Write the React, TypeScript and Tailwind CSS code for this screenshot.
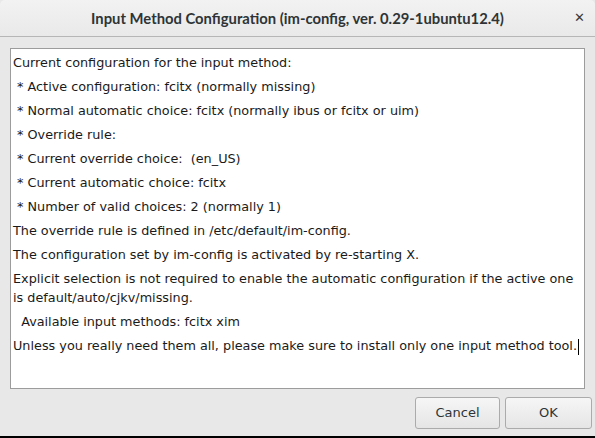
import React from 'react';

const lines: string[] = [
  'Current configuration for the input method:',
  ' * Active configuration: fcitx (normally missing)',
  ' * Normal automatic choice: fcitx (normally ibus or fcitx or uim)',
  ' * Override rule: ',
  ' * Current override choice:  (en_US)',
  ' * Current automatic choice: fcitx',
  ' * Number of valid choices: 2 (normally 1)',
  'The override rule is defined in /etc/default/im-config.',
  'The configuration set by im-config is activated by re-starting X.',
  'Explicit selection is not required to enable the automatic configuration if the active one is default/auto/cjkv/missing.',
  '  Available input methods: fcitx xim',
];

const App = () => {
  return (
    <div className="w-[595px] h-[438px] flex flex-col bg-[#e8e8e8] text-[#2e3436] overflow-hidden" style={{ fontFamily: '"DejaVu Sans", sans-serif' }}>
      <div className="h-[37px] shrink-0 flex items-center justify-center relative border-b border-[#b6b6b6] bg-gradient-to-b from-[#f2f2f2] to-[#e9e9e9] rounded-t-[5px]">
        <span className="text-[14.8px] font-bold text-[#2e3436]" style={{ fontFamily: 'Lato, sans-serif' }}>Input Method Configuration (im-config, ver. 0.29-1ubuntu12.4)</span>
        <span className="absolute right-[10px] top-[11px] text-[13px] font-bold text-[#3a3a3a] leading-none">✕</span>
      </div>

      <div className="flex-1 flex flex-col pt-[11px]">
        <div className="mx-[10px] h-[341px] bg-white border border-[#9c9c9c] pl-[2px] pr-[2px] pt-[4px] text-[12.8px] leading-[19px] text-[#1a1a1a]">
          {lines.map((l, i) => (
            <p key={i} className="mb-[5px] whitespace-pre-wrap">{l}</p>
          ))}
          <p className="whitespace-pre-wrap">
            Unless you really need them all, please make sure to install only one input method tool.<span className="inline-block w-px h-[16px] bg-black align-middle ml-px" />
          </p>
        </div>

        <div className="flex justify-end gap-[5px] mt-[8px] pr-[3px]">
          <button className="w-[85px] h-[32px] rounded-[3px] border border-[#ababab] bg-gradient-to-b from-[#f6f6f6] to-[#e5e5e5] text-[13px] text-[#2e3436]">Cancel</button>
          <button className="w-[87px] h-[32px] rounded-[3px] border border-[#ababab] bg-gradient-to-b from-[#f6f6f6] to-[#e5e5e5] text-[13px] text-[#2e3436]">OK</button>
        </div>
      </div>
      <div className="h-[2px] bg-black shrink-0" />
    </div>
  );
};

export default App;
